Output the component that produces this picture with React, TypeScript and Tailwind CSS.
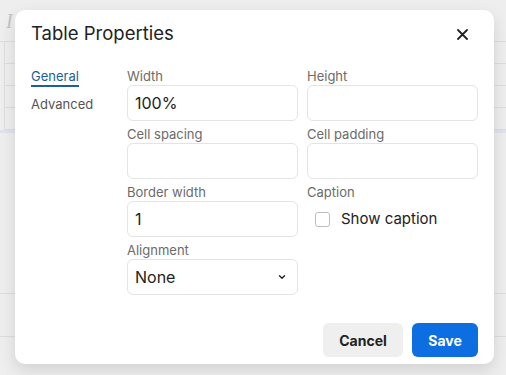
import React from "react";

const rows = [1, 2, 3, 4];

function Field({ label, value, select }: { label: string; value?: string; select?: boolean }) {
  return (
    <div className="flex flex-col">
      <label className="h-[18px] text-[13px] leading-[18px] text-[#6b6b6b]">{label}</label>
      <div className="flex h-[36px] items-center justify-between rounded-[6px] border border-[#e4e4e4] bg-white pl-[7px] pr-[10px] text-[16px] text-[#222]">
        <span>{value}</span>
        {select && (
          <svg width="10" height="10" viewBox="0 0 10 10" fill="none">
            <path d="M2.5 3.8 5 6.3 7.5 3.8" stroke="#222" strokeWidth="1.4" strokeLinecap="round" strokeLinejoin="round" />
          </svg>
        )}
      </div>
    </div>
  );
}

export default function App() {
  return (
    <div className="relative h-[375px] w-[506px] overflow-hidden bg-[#eeeeee] font-['Inter',sans-serif]">
      {/* page behind the overlay */}
      <div className="h-[42px] border-b border-[#dddddd] pl-[6px] pt-[6px] font-['Liberation_Serif',serif] text-[20px] italic text-[#c4c4c4]">
        I
      </div>
      <div className="ml-[4px] border-l border-[#dddddd]">
        {rows.map((r) => (
          <div key={r} className="h-[22px] border-b border-[#dddddd]" />
        ))}
      </div>
      <div className="h-[3px] bg-[#dfe3ec]" />
      <div className="mt-[160px] h-[44px] border-y border-[#dddddd]" />

      {/* dialog */}
      <div className="absolute left-[15px] top-[10px] w-[479px] rounded-[10px] bg-white shadow-[0_6px_16px_rgba(0,0,0,0.12)]">
        <div className="flex h-[48px] items-center justify-between pl-4 pr-[18px]">
          <h2 className="text-[18.5px] font-normal text-[#222]">Table Properties</h2>
          <button className="flex h-[28px] w-[28px] items-center justify-center">
            <svg width="11" height="11" viewBox="0 0 11 11" fill="none">
              <path d="M1 1 10 10M10 1 1 10" stroke="#222" strokeWidth="1.8" strokeLinecap="round" />
            </svg>
          </button>
        </div>

        <div className="flex pl-4 pr-4 pt-[9px]">
          <div className="flex w-[96px] flex-col text-[13px]">
            <span className="h-[18px] leading-[18px] text-[#1f5f95]">
              <span className="border-b-2 border-[#1f5f95] pb-[1px]">General</span>
            </span>
            <span className="mt-[10px] leading-[18px] text-[#555]">Advanced</span>
          </div>
          <div className="grid w-[351px] grid-cols-2 gap-x-[9px] gap-y-[4px]">
            <Field label="Width" value="100%" />
            <Field label="Height" />
            <Field label="Cell spacing" />
            <Field label="Cell padding" />
            <Field label="Border width" value="1" />
            <div className="flex flex-col">
              <label className="h-[18px] text-[13px] leading-[18px] text-[#6b6b6b]">Caption</label>
              <div className="flex h-[36px] items-center gap-[11px] pl-[8px]">
                <span className="h-[15px] w-[15px] rounded-[3px] border border-[#bdbdbd]" />
                <span className="text-[15px] text-[#222]">Show caption</span>
              </div>
            </div>
            <Field label="Alignment" value="None" select />
          </div>
        </div>

        <div className="mt-[28px] flex justify-end gap-[9px] px-4 pb-[7px]">
          <button className="h-[34px] w-[80px] rounded-[6px] bg-[#efefef] text-[14px] font-bold text-[#222]">Cancel</button>
          <button className="h-[34px] w-[66px] rounded-[6px] bg-[#0c6ee0] text-[14px] font-bold text-white">Save</button>
        </div>
      </div>
    </div>
  );
}
